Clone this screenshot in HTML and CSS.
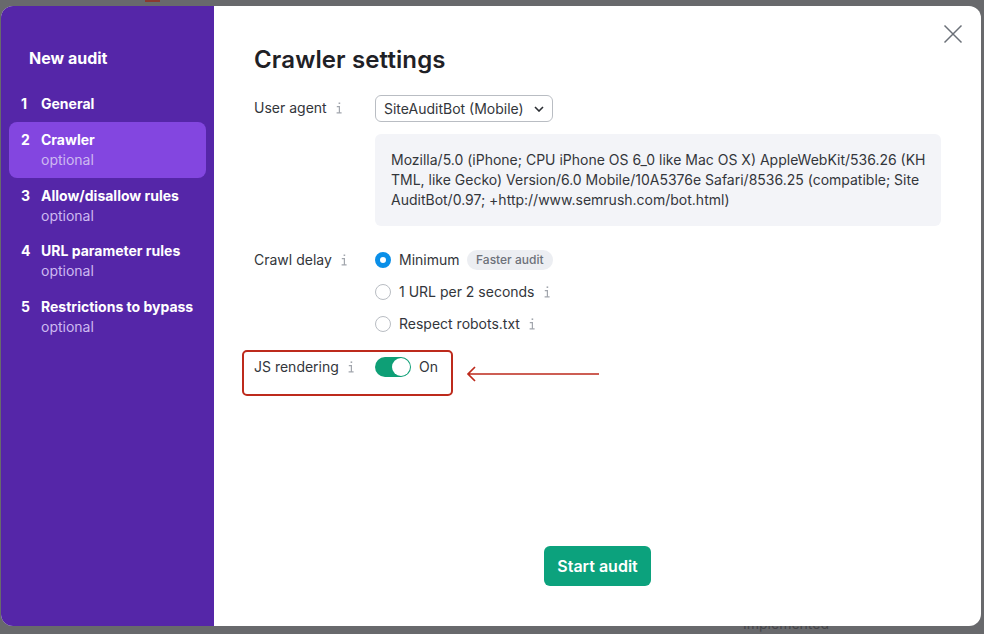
FILE: index.html
```html
<!DOCTYPE html>
<html lang="en">

<head>
    <meta charset="UTF-8">
    <title>New audit</title>
    <link rel="stylesheet" href="styles.css">
</head>

<body>

    <!-- Info icon used next to the labels -->
    <svg class="icon-defs" width="0" height="0">
        <symbol id="info" viewBox="0 0 8 12">
            <path d="M3.6 1.2h1.6" fill="none" stroke="currentColor" stroke-width="1.6" />
            <path d="M1.8 4.6h2.6v6M1.6 10.9h5" fill="none" stroke="currentColor" stroke-width="1.2" />
        </symbol>
    </svg>

    <!-- Page behind the dialog, only edges are visible -->
    <div class="backdrop-mark"></div>
    <div class="backdrop-text">Implemented</div>

    <div class="modal">

        <!-- Left side steps -->
        <aside class="sidebar">
            <h2>New audit</h2>
            <ul class="steps">
                <li class="step step-single"><span class="step-num">1</span><div><b>General</b></div></li>
                <li class="step active"><span class="step-num">2</span><div><b>Crawler</b><small>optional</small></div></li>
                <li class="step step-short"><span class="step-num">3</span><div><b>Allow/disallow rules</b><small>optional</small></div></li>
                <li class="step"><span class="step-num">4</span><div><b>URL parameter rules</b><small>optional</small></div></li>
                <li class="step"><span class="step-num">5</span><div><b>Restrictions to bypass</b><small>optional</small></div></li>
            </ul>
        </aside>

        <!-- Settings form -->
        <main class="content">
            <button class="close" aria-label="Close">
                <svg width="20" height="20" viewBox="0 0 20 20">
                    <path d="M1.5 1.5l17 17M18.5 1.5l-17 17" fill="none" stroke="#6b7078" stroke-width="1.5" />
                </svg>
            </button>

            <h1>Crawler settings</h1>

            <div class="row row-agent">
                <div class="row-label">User agent <svg class="info"><use href="#info" /></svg></div>
                <div>
                    <div class="select">
                        SiteAuditBot (Mobile)
                        <svg width="10" height="6" viewBox="0 0 10 6">
                            <path d="M1 1l4 4 4-4" fill="none" stroke="#2b2e33" stroke-width="1.6" />
                        </svg>
                    </div>
                    <div class="agent-box">Mozilla/5.0 (iPhone; CPU iPhone OS 6_0 like Mac OS X) AppleWebKit/536.26 (KHTML, like Gecko) Version/6.0 Mobile/10A5376e Safari/8536.25 (compatible; SiteAuditBot/0.97; +http://www.semrush.com/bot.html)</div>
                </div>
            </div>

            <div class="row row-delay">
                <div class="row-label">Crawl delay <svg class="info"><use href="#info" /></svg></div>
                <div class="radios">
                    <div class="radio-row"><span class="radio checked"></span>Minimum <span class="tag">Faster audit</span></div>
                    <div class="radio-row"><span class="radio"></span>1 URL per 2 seconds <svg class="info"><use href="#info" /></svg></div>
                    <div class="radio-row"><span class="radio"></span>Respect robots.txt <svg class="info"><use href="#info" /></svg></div>
                </div>
            </div>

            <div class="row row-js">
                <div class="row-label">JS rendering <svg class="info"><use href="#info" /></svg></div>
                <div class="toggle-row"><span class="toggle"></span>On</div>

                <!-- Red annotation over the row -->
                <div class="callout"></div>
                <svg class="callout-arrow" width="134" height="16" viewBox="0 0 134 16">
                    <path d="M133 8H2M9 1L2 8l7 7" fill="none" stroke="#bd2a1c" stroke-width="1.7" />
                </svg>
            </div>

            <div class="footer">
                <button class="start-button">Start audit</button>
            </div>
        </main>
    </div>

</body>

</html>
```

FILE: styles.css
```css
* {
    margin: 0;
    padding: 0;
    box-sizing: border-box;
}

html,
body {
    height: 100%;
}

body {
    font-family: Inter, "Liberation Sans", sans-serif;
    font-size: 14px;
    line-height: 20px;
    color: #33363b;
    background-color: #68696c;
    padding: 6px 3px 8px 1px;
    position: relative;
    overflow: hidden;
}

.icon-defs {
    position: absolute;
}

/* Bits of the page behind the dialog */
.backdrop-mark {
    position: absolute;
    top: 0;
    left: 145px;
    width: 15px;
    height: 2px;
    background-color: #8a3a30;
}

.backdrop-text {
    position: absolute;
    top: 614px;
    left: 743px;
    font-size: 14px;
    color: #46464a;
}

.modal {
    position: relative;
    display: flex;
    height: 620px;
    background-color: white;
    border-radius: 12px;
    overflow: hidden;
}

/* Sidebar */
.sidebar {
    flex: 0 0 213px;
    background-color: #5526a8;
    color: white;
    padding: 42px 8px 0;
}

.sidebar h2 {
    font-size: 16px;
    line-height: 20px;
    font-weight: 700;
    padding-left: 20px;
    margin-bottom: 18px;
}

.steps {
    list-style: none;
}

.step {
    display: flex;
    height: 56px;
    padding: 8px 12px;
    border-radius: 8px;
}

.step-single {
    height: 36px;
}

.step-short {
    height: 55px;
}

.step.active {
    background-color: #8346e0;
}

.step-num {
    flex: 0 0 20px;
    font-weight: 700;
}

.step b {
    display: block;
    font-weight: 700;
    white-space: nowrap;
}

.step small {
    display: block;
    font-size: 14px;
    color: #cdb9f0;
}

/* Main part */
.content {
    position: relative;
    flex: 1;
    display: flex;
    flex-direction: column;
    padding: 36px 40px 40px;
}

.close {
    position: absolute;
    top: 18px;
    right: 18px;
    display: flex;
    background: none;
    border: none;
    cursor: pointer;
}

h1 {
    font-size: 24px;
    line-height: 36px;
    font-weight: 600;
    letter-spacing: 0.12px;
    color: #1f2126;
    margin-bottom: 17px;
}

.row {
    display: grid;
    grid-template-columns: 121px 1fr;
}

.row-label {
    display: flex;
    align-items: center;
    height: 20px;
    white-space: nowrap;
}

.info {
    width: 8px;
    height: 12px;
    margin-left: 8px;
    color: #a2a6ad;
}

.row-agent .row-label {
    margin-top: 3px;
}

.select {
    display: inline-flex;
    align-items: center;
    gap: 10px;
    height: 27px;
    padding: 0 8px;
    border: 1px solid #b9bdc3;
    border-radius: 6px;
    white-space: nowrap;
}

.agent-box {
    margin-top: 12px;
    padding: 16px 14px 16px 16px;
    height: 92px;
    background-color: #f3f4f8;
    border-radius: 6px;
    word-break: break-all;
}

.row-delay {
    margin-top: 24px;
}

.radios {
    display: flex;
    flex-direction: column;
    gap: 12px;
}

.radio-row {
    display: flex;
    align-items: center;
    height: 20px;
}

.radio {
    width: 16px;
    height: 16px;
    margin-right: 8px;
    border: 1px solid #b9bdc3;
    border-radius: 50%;
    background-color: white;
}

.radio.checked {
    border: 5px solid #0a8fe8;
}

.tag {
    margin-left: 7px;
    padding: 0 9.5px;
    font-size: 12px;
    font-weight: 500;
    color: #6c7179;
    background-color: #eceef2;
    border-radius: 10px;
}

.row-js {
    position: relative;
    margin-top: 23px;
}

.toggle-row {
    display: flex;
    align-items: center;
    gap: 8px;
    height: 20px;
}

.toggle {
    position: relative;
    width: 36px;
    height: 20px;
    background-color: #0e9f76;
    border-radius: 10px;
}

.toggle::after {
    content: "";
    position: absolute;
    top: 1px;
    right: 1px;
    width: 18px;
    height: 18px;
    background-color: white;
    border-radius: 50%;
}

.callout {
    position: absolute;
    top: -7px;
    left: -12px;
    width: 211px;
    height: 46px;
    border: 2px solid #bd2a1c;
    border-radius: 5px;
}

.callout-arrow {
    position: absolute;
    top: 9px;
    left: 212px;
}

.footer {
    margin-top: auto;
    display: flex;
    justify-content: center;
}

.start-button {
    height: 40px;
    width: 107px;
    font-family: inherit;
    font-size: 16px;
    font-weight: 600;
    color: white;
    background-color: #0ca27d;
    border: none;
    border-radius: 6px;
    cursor: pointer;
}
```
